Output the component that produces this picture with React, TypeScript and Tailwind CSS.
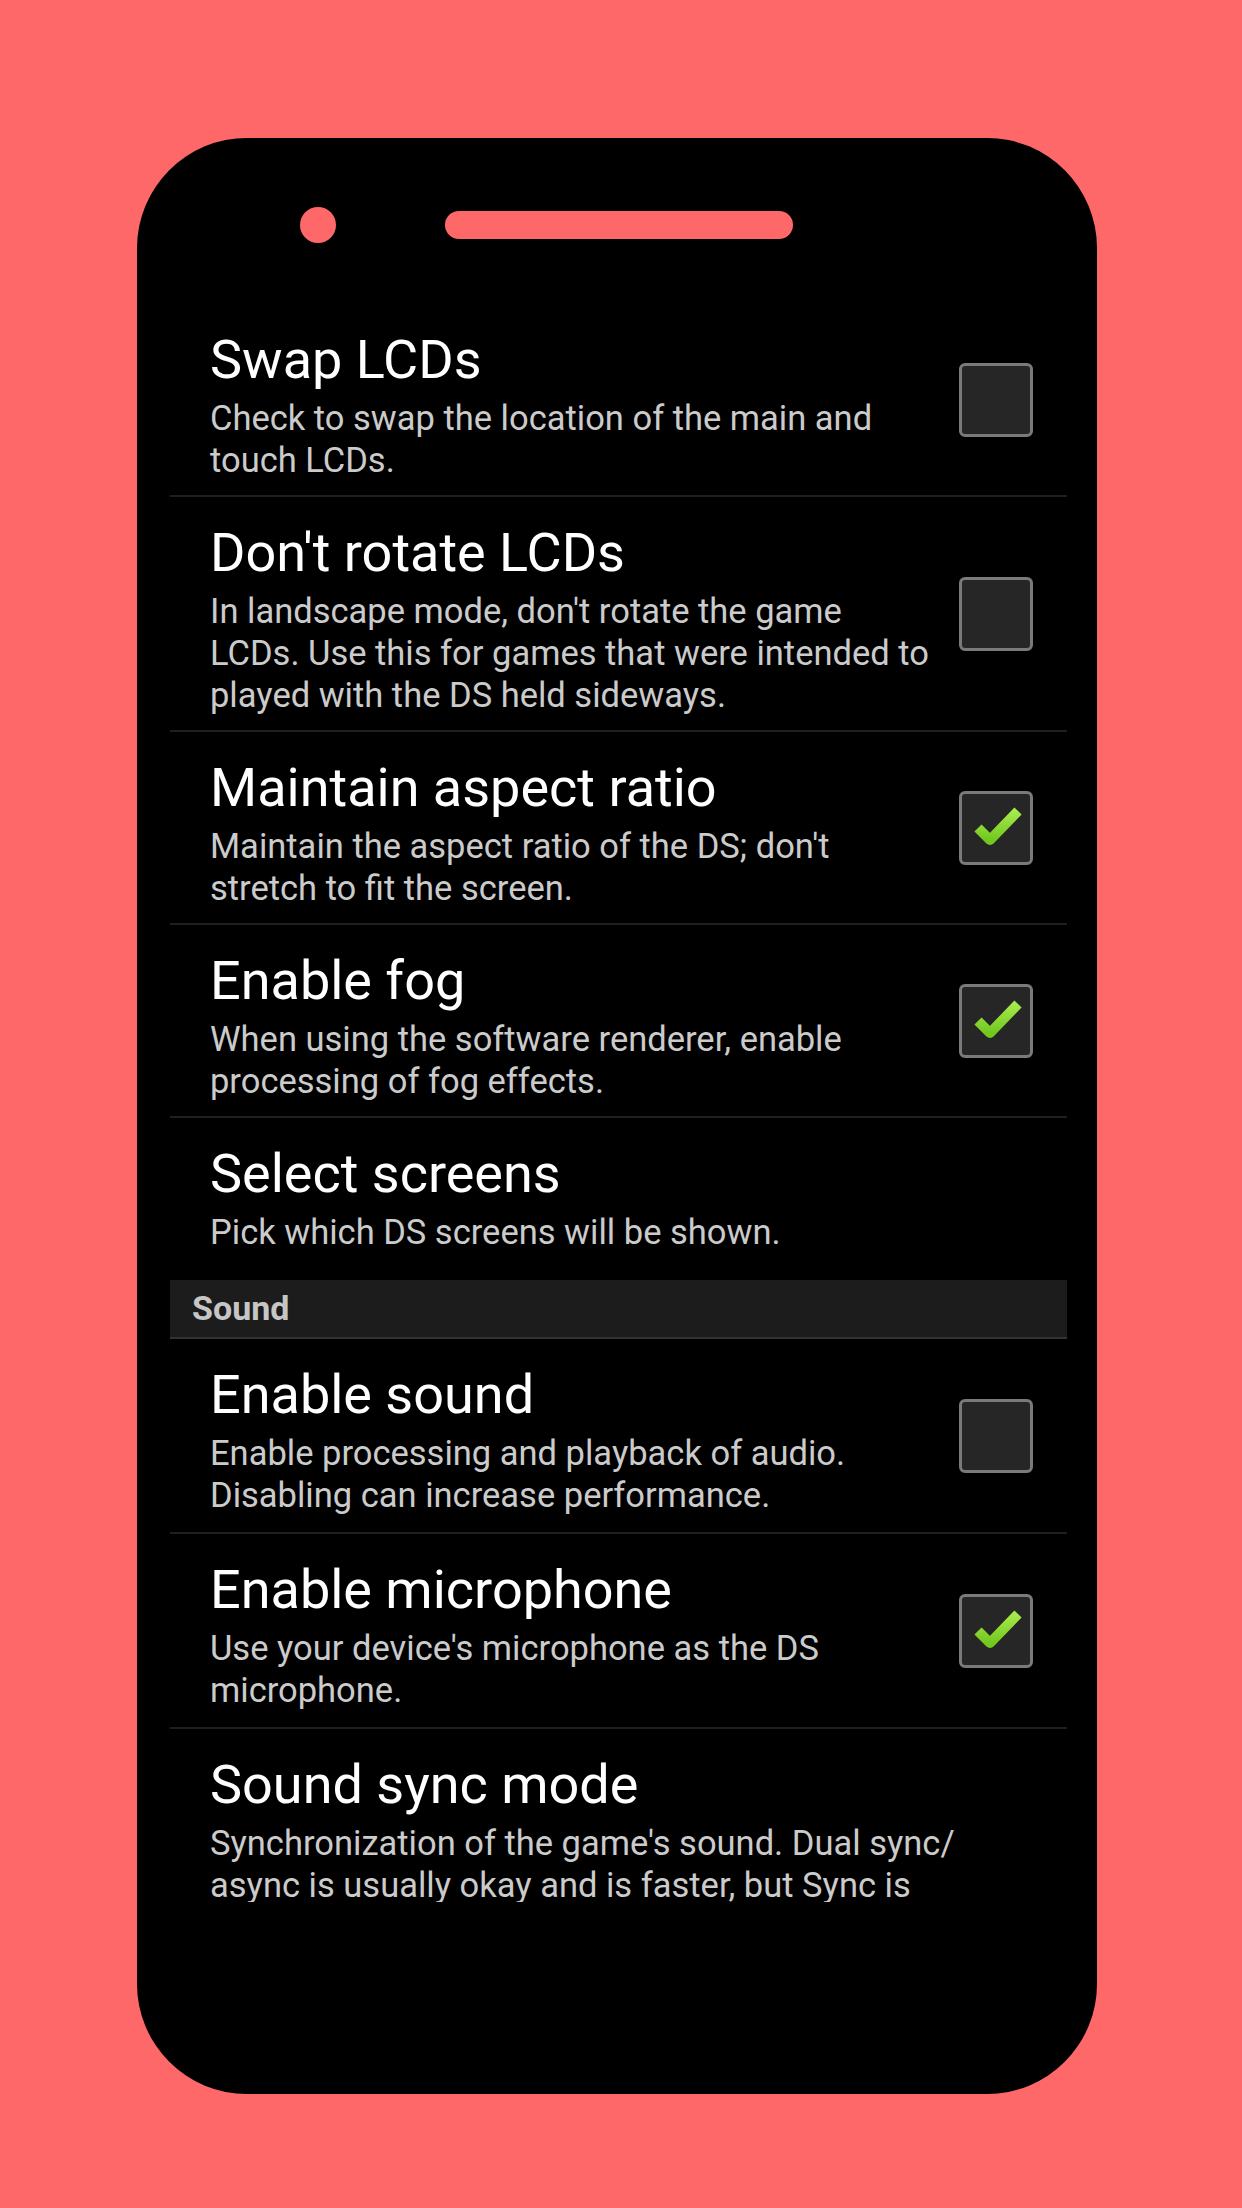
import { Fragment } from 'react'

interface Pref {
  title: string
  desc: string[]
  checked?: boolean
}

const DISPLAY: Pref[] = [
  { title: 'Swap LCDs', desc: ['Check to swap the location of the main and', 'touch LCDs.'], checked: false },
  {
    title: "Don't rotate LCDs",
    desc: ["In landscape mode, don't rotate the game", 'LCDs. Use this for games that were intended to', 'played with the DS held sideways.'],
    checked: false,
  },
  { title: 'Maintain aspect ratio', desc: ["Maintain the aspect ratio of the DS; don't", 'stretch to fit the screen.'], checked: true },
  { title: 'Enable fog', desc: ['When using the software renderer, enable', 'processing of fog effects.'], checked: true },
]

const SOUND: Pref[] = [
  { title: 'Enable sound', desc: ['Enable processing and playback of audio.', 'Disabling can increase performance.'], checked: false },
  { title: 'Enable microphone', desc: ["Use your device's microphone as the DS", 'microphone.'], checked: true },
  {
    title: 'Sound sync mode',
    desc: ["Synchronization of the game's sound. Dual sync/", 'async is usually okay and is faster, but Sync is'],
  },
]

function Checkbox({ checked }: { checked: boolean }) {
  return (
    <div className="w-[74px] h-[74px] shrink-0 rounded-[6px] border-[3px] border-[#7a7a7a] bg-[#262626] flex items-center justify-center">
      {checked && (
        <svg width="74" height="74" viewBox="0 0 74 74" className="-m-[3px]">
          <defs>
            <linearGradient id="chk" x1="0" y1="0" x2="0" y2="1">
              <stop offset="0" stopColor="#a6ea4c" />
              <stop offset="1" stopColor="#72c81f" />
            </linearGradient>
          </defs>
          <path d="M19 37 L31 49 L59 20" fill="none" stroke="url(#chk)" strokeWidth="10" strokeLinejoin="round" />
        </svg>
      )}
    </div>
  )
}

function Row({ p, last, loose }: { p: Pref; last?: boolean; loose?: boolean }) {
  return (
    <div className={`flex items-center pl-[40px] pr-[34px] ${last ? '' : 'border-b-2 border-[#1f1f1f]'}`}>
      <div className={`flex-1 pt-[26px] ${loose ? 'pb-[16px]' : 'pb-[14px]'}`}>
        <div className="text-[54px] leading-[60px] text-white">{p.title}</div>
        <div className="mt-[7px] text-[34.5px] leading-[42px] text-[#cbcbcb]">
          {p.desc.map((d, i) => (
            <div key={i} className="whitespace-nowrap">{d}</div>
          ))}
        </div>
      </div>
      {p.checked !== undefined && <Checkbox checked={p.checked} />}
    </div>
  )
}

export default function App() {
  return (
    <div className="w-[1242px] h-[2208px] bg-[#ff6868] pt-[138px] pl-[137px]" style={{ fontFamily: 'Roboto, "Noto Sans", sans-serif' }}>
      <div className="w-[960px] h-[1956px] bg-black rounded-[110px] flex flex-col">
        {/* earpiece */}
        <div className="flex items-center h-[28px] mt-[73px] mb-[65px] pl-[163px]">
          <div className="w-[36px] h-[36px] rounded-full bg-[#ff6868]" />
          <div className="ml-[109px] w-[348px] h-[28px] rounded-full bg-[#ff6868]" />
        </div>

        {/* screen */}
        <div className="ml-[33px] w-[897px] h-[1598px] overflow-hidden">
          {DISPLAY.map(p => (
            <Row key={p.title} p={p} />
          ))}
          <div className="pl-[40px] pr-[34px] pt-[26px] pb-[27px]">
            <div className="text-[54px] leading-[60px] text-white">Select screens</div>
            <div className="mt-[7px] text-[34.5px] leading-[42px] text-[#cbcbcb]">Pick which DS screens will be shown.</div>
          </div>
          <div className="h-[59px] bg-[#1c1c1c] border-b-2 border-[#333333] flex items-center pl-[22px]">
            <span className="text-[34px] font-bold text-[#c6c6c6]">Sound</span>
          </div>
          {SOUND.map((p, i) => (
            <Fragment key={p.title}>
              <Row p={p} loose last={i === SOUND.length - 1} />
            </Fragment>
          ))}
        </div>
      </div>
    </div>
  )
}
